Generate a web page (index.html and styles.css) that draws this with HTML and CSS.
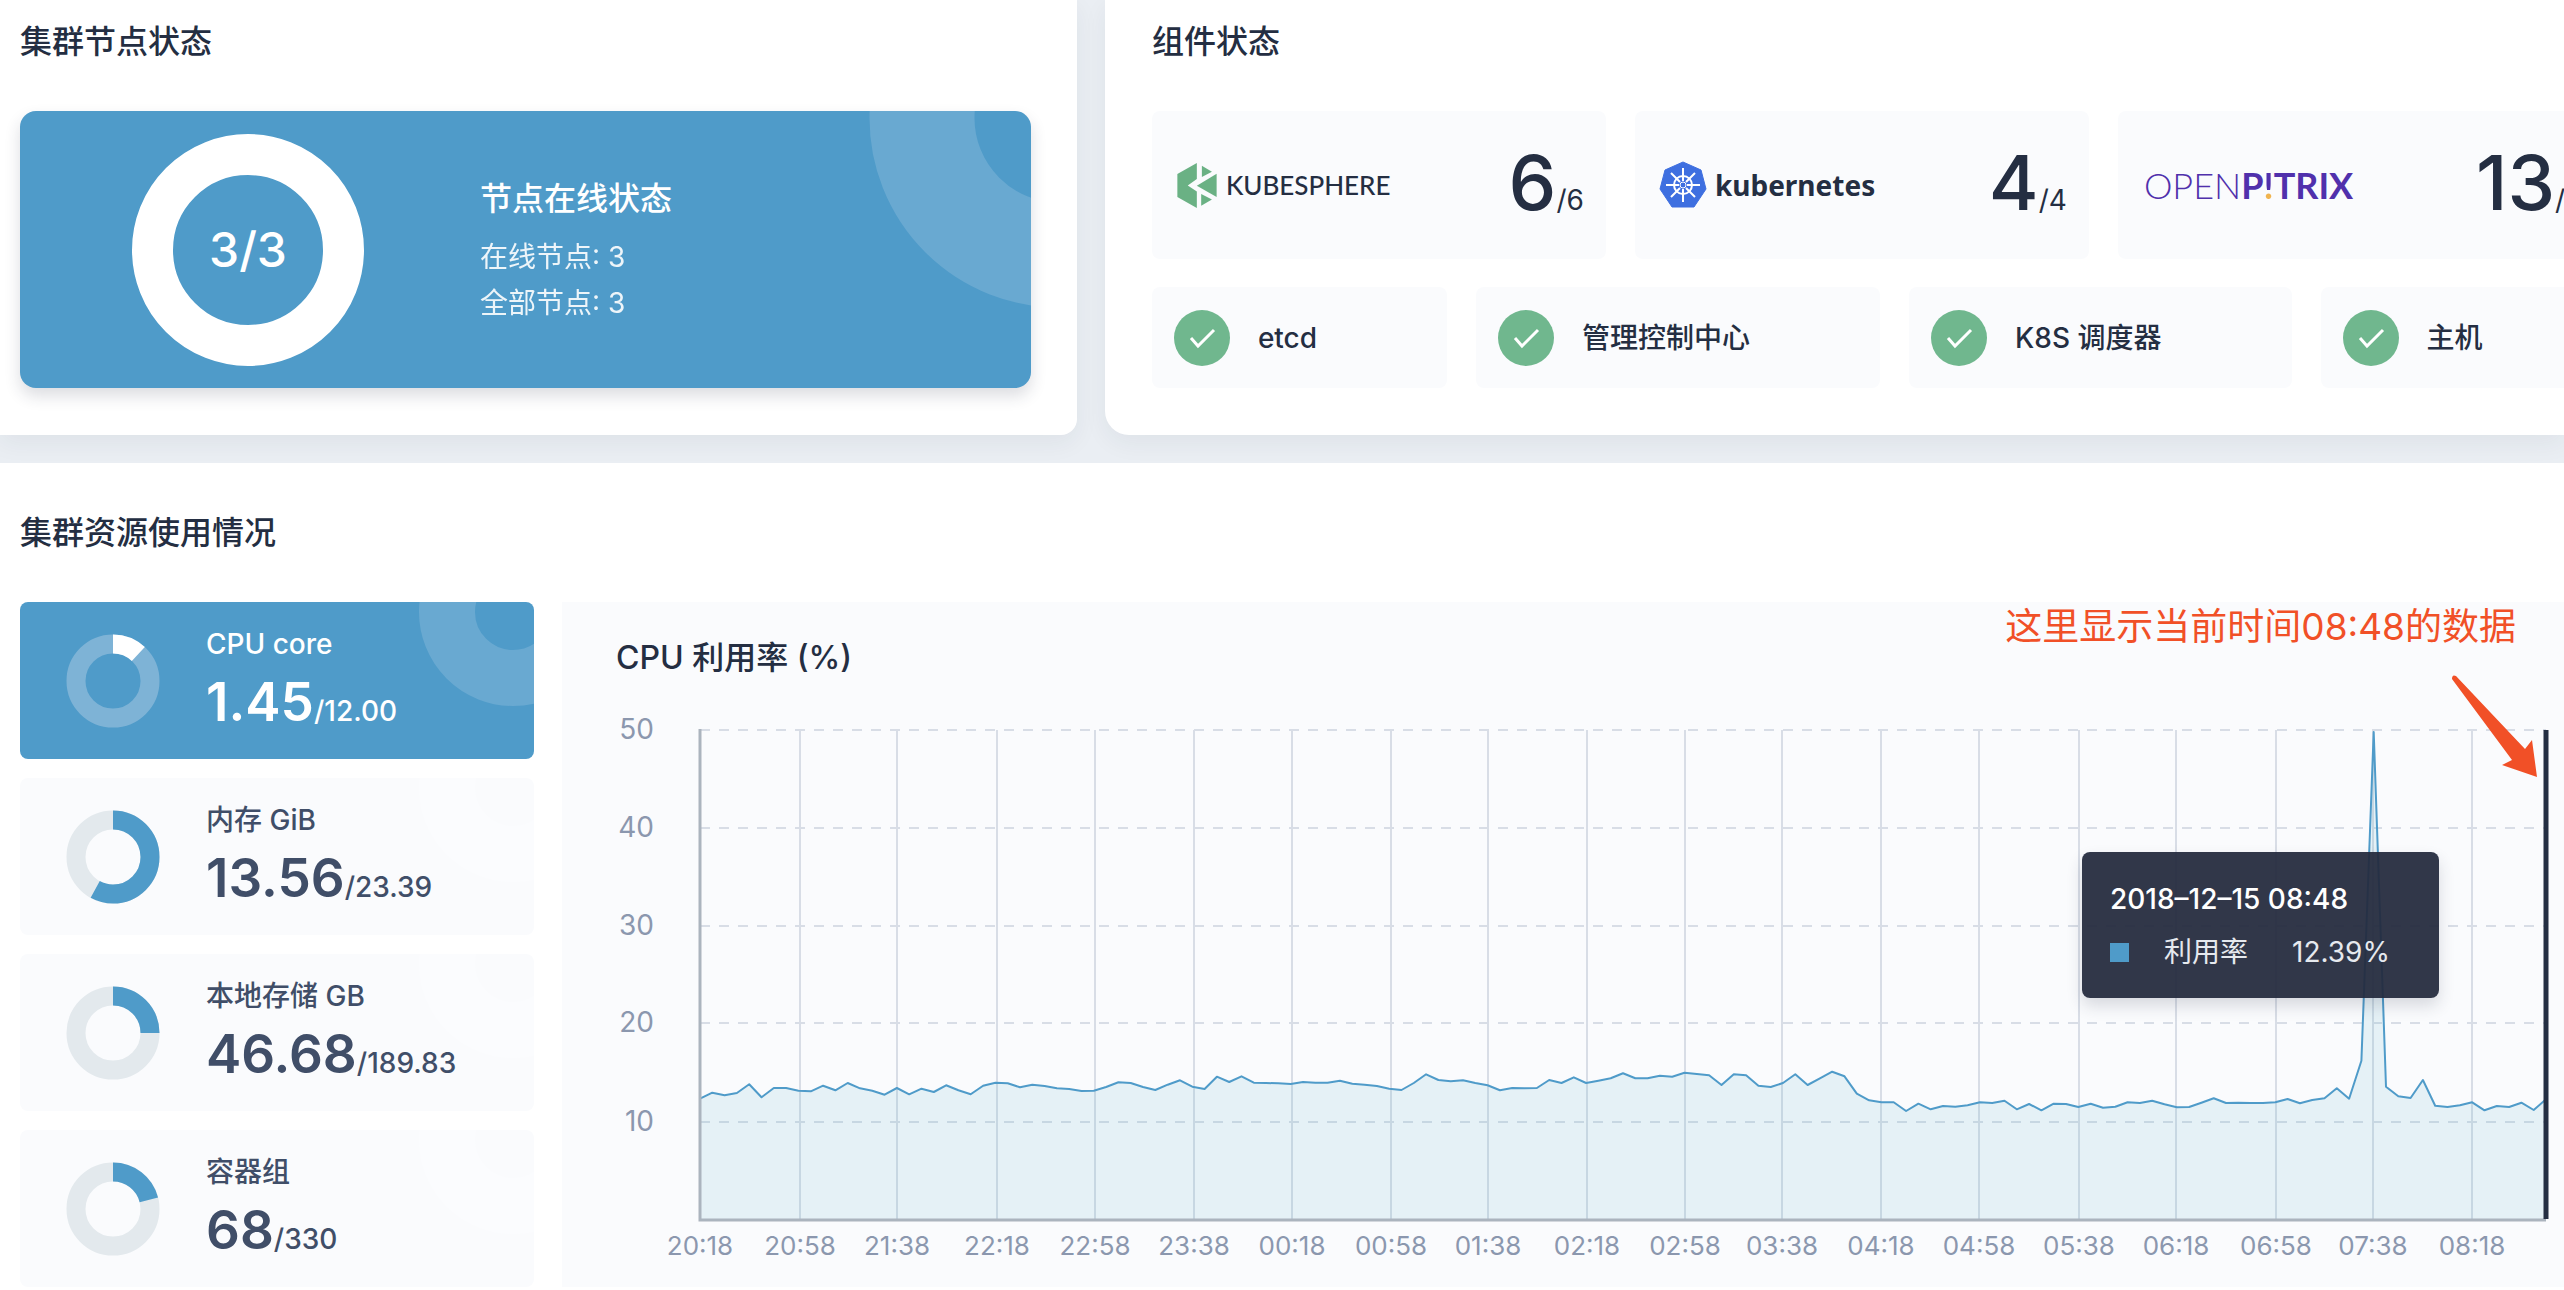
FILE: index.html
```html
<!DOCTYPE html>
<html lang="zh-CN">
<head>
<meta charset="utf-8">
<title>集群状态</title>
<link rel="stylesheet" href="styles.css">
</head>
<body>
<main class="dashboard">
  <div class="top">
    <section class="panel nodes">
      <h2 class="heading">集群节点状态</h2>
      <div class="node-card">
        <svg class="node-deco" width="162" height="196" viewBox="0 0 162 196" aria-hidden="true"><circle cx="190" cy="7" r="137" fill="none" stroke="currentColor" stroke-width="105"/></svg>
        <div class="node-ring">3/3</div>
        <div class="node-info">
          <h3>节点在线状态</h3>
          <p>在线节点: 3</p>
          <p>全部节点: 3</p>
        </div>
      </div>
    </section>

    <section class="panel components">
      <h2 class="heading">组件状态</h2>
      <div class="services">
        <div class="service">
          <div class="logo kubesphere">
            <svg width="42" height="47" viewBox="20 62 125 140" aria-hidden="true"><g fill="#6ab184"><path d="M24 98 82 65V113L55 132 82 150V199L24 166Z"/><path d="M97 73 127 91 97 107Z"/><path d="M82 133 141 97V166Z"/><path d="M95 157 127 174 95 192Z"/></g></svg>
            <span>KUBESPHERE</span>
          </div>
          <p class="count"><strong>6</strong>/6</p>
        </div>
        <div class="service">
          <div class="logo kubernetes">
            <svg width="48" height="48" viewBox="0 0 48 48" aria-hidden="true">
              <path d="M24 1 42 9 47 28 35 46H13L1 28 6 9Z" fill="#3e6fe0" stroke="#3e6fe0" stroke-linejoin="round"/>
              <g stroke="#fff" stroke-width="2" fill="none"><circle cx="24" cy="24" r="9"/><path d="M24 7V20M24 28V41M7 24H20M28 24H41M12 12 21 21M27 27 36 36M36 12 27 21M21 27 12 36"/><circle cx="24" cy="24" r="3" stroke-width="1"/></g>
            </svg>
            <span>kubernetes</span>
          </div>
          <p class="count"><strong>4</strong>/4</p>
        </div>
        <div class="service wide">
          <div class="logo openpitrix"><span>OPEN<b>P<i>!</i>TRIX</b></span></div>
          <p class="count"><strong>13</strong>/13</p>
        </div>
      </div>
      <div class="checks">
        <div class="check"><svg width="56" height="56" viewBox="0 0 56 56" aria-hidden="true"><circle cx="28" cy="28" r="28" fill="#70b78e"/><path d="M17 28 24 36 40 20" fill="none" stroke="#fff" stroke-width="3"/></svg>etcd</div>
        <div class="check"><svg width="56" height="56" viewBox="0 0 56 56" aria-hidden="true"><circle cx="28" cy="28" r="28" fill="#70b78e"/><path d="M17 28 24 36 40 20" fill="none" stroke="#fff" stroke-width="3"/></svg>管理控制中心</div>
        <div class="check"><svg width="56" height="56" viewBox="0 0 56 56" aria-hidden="true"><circle cx="28" cy="28" r="28" fill="#70b78e"/><path d="M17 28 24 36 40 20" fill="none" stroke="#fff" stroke-width="3"/></svg>K8S 调度器</div>
        <div class="check"><svg width="56" height="56" viewBox="0 0 56 56" aria-hidden="true"><circle cx="28" cy="28" r="28" fill="#70b78e"/><path d="M17 28 24 36 40 20" fill="none" stroke="#fff" stroke-width="3"/></svg>主机</div>
      </div>
    </section>
  </div>

  <section class="usage">
    <h2 class="heading">集群资源使用情况</h2>
    <div class="usage-body">
      <div class="metrics">
        <div class="metric active">
          <svg class="metric-deco" width="115" height="104" viewBox="0 0 115 104" aria-hidden="true"><circle cx="94" cy="10" r="66" fill="none" stroke="currentColor" stroke-width="56"/></svg>
          <svg class="donut" viewBox="0 0 94 94" aria-hidden="true"><circle class="track" cx="47" cy="47" r="37"/><circle class="arc" cx="47" cy="47" r="37" pathLength="100" stroke-dasharray="12 100"/></svg>
          <div class="metric-text"><h3>CPU core</h3><p><strong>1.45</strong>/12.00</p></div>
        </div>
        <div class="metric">
          <svg class="metric-deco" width="115" height="104" viewBox="0 0 115 104" aria-hidden="true"><circle cx="94" cy="10" r="66" fill="none" stroke="currentColor" stroke-width="56"/></svg>
          <svg class="donut" viewBox="0 0 94 94" aria-hidden="true"><circle class="track" cx="47" cy="47" r="37"/><circle class="arc" cx="47" cy="47" r="37" pathLength="100" stroke-dasharray="58 100"/></svg>
          <div class="metric-text"><h3>内存 GiB</h3><p><strong>13.56</strong>/23.39</p></div>
        </div>
        <div class="metric">
          <svg class="metric-deco" width="115" height="104" viewBox="0 0 115 104" aria-hidden="true"><circle cx="94" cy="10" r="66" fill="none" stroke="currentColor" stroke-width="56"/></svg>
          <svg class="donut" viewBox="0 0 94 94" aria-hidden="true"><circle class="track" cx="47" cy="47" r="37"/><circle class="arc" cx="47" cy="47" r="37" pathLength="100" stroke-dasharray="25 100"/></svg>
          <div class="metric-text"><h3>本地存储 GB</h3><p><strong>46.68</strong>/189.83</p></div>
        </div>
        <div class="metric">
          <svg class="metric-deco" width="115" height="104" viewBox="0 0 115 104" aria-hidden="true"><circle cx="94" cy="10" r="66" fill="none" stroke="currentColor" stroke-width="56"/></svg>
          <svg class="donut" viewBox="0 0 94 94" aria-hidden="true"><circle class="track" cx="47" cy="47" r="37"/><circle class="arc" cx="47" cy="47" r="37" pathLength="100" stroke-dasharray="21 100"/></svg>
          <div class="metric-text"><h3>容器组</h3><p><strong>68</strong>/330</p></div>
        </div>
      </div>

      <div class="chart">
        <h3 class="chart-title">CPU 利用率 (%)</h3>
        <svg class="plot" viewBox="0 0 2002 585" role="img" aria-label="CPU 利用率">
          <path class="grid-x" d="M238 30V520M335 30V520M435 30V520M533 30V520M632 30V520M730 30V520M829 30V520M926 30V520M1025 30V520M1123 30V520M1220 30V520M1319 30V520M1417 30V520M1517 30V520M1614 30V520M1714 30V520M1811 30V520M1910 30V520"/>
          <path class="grid-y" d="M138 30H1984M138 128H1984M138 226H1984M138 323H1984M138 422H1984"/>
          <path class="area" id="area"/>
          <path class="line" id="line"/>
          <path class="axis" d="M138 29V520H1984"/>
          <path class="cursor" d="M1984 30V519"/>
          <g class="ylabels"><text x="92" y="39">50</text><text x="92" y="137">40</text><text x="92" y="235">30</text><text x="92" y="332">20</text><text x="92" y="431">10</text></g>
          <g class="xlabels"><text x="138" y="555">20:18</text><text x="238" y="555">20:58</text><text x="335" y="555">21:38</text><text x="435" y="555">22:18</text><text x="533" y="555">22:58</text><text x="632" y="555">23:38</text><text x="730" y="555">00:18</text><text x="829" y="555">00:58</text><text x="926" y="555">01:38</text><text x="1025" y="555">02:18</text><text x="1123" y="555">02:58</text><text x="1220" y="555">03:38</text><text x="1319" y="555">04:18</text><text x="1417" y="555">04:58</text><text x="1517" y="555">05:38</text><text x="1614" y="555">06:18</text><text x="1714" y="555">06:58</text><text x="1811" y="555">07:38</text><text x="1910" y="555">08:18</text></g>
        </svg>
        <div class="tooltip">
          <h4>2018–12–15 08:48</h4>
          <p><span class="swatch"></span><span>利用率</span><span>12.39%</span></p>
        </div>
        <div class="note">
          <p>这里显示当前时间08:48的数据</p>
          <svg width="88" height="104" viewBox="0 0 88 104" aria-hidden="true"><path d="M2 5Q2 0 6 2L75 75 82 66 87 103 52 91 62 86Z" fill="#f15027"/></svg>
        </div>
      </div>
    </div>
  </section>
</main>
<script src="chart.js"></script>
</body>
</html>
```
FILE: chart.js
```js
// Utilisation samples, one every five minutes, 294 units to 10 %.
const samples = [
  364,382,374,381,407,368,396,396,388,386,403,389,411,395,388,376,396,377,394,384,
  404,389,377,403,412,410,398,406,402,395,393,387,388,399,413,411,399,390,406,419,
  400,393,430,414,431,412,411,410,408,414,412,412,418,409,406,402,394,390,411,437,
  420,416,419,411,404,389,396,395,396,420,411,428,411,418,425,440,425,425,433,430,
  442,438,434,405,437,434,403,399,411,437,405,425,445,431,379,359,353,353,327,349,
  332,342,340,344,353,351,358,332,348,329,349,348,339,349,337,340,353,351,358,347,
  338,339,352,365,351,352,351,351,353,363,350,360,365,395,364,478,1464,400,371,366,
  420,343,339,344,353,329,342,339,352,330,362
];
const left = 138, right = 1984, base = 520;
const step = (right - left) / (samples.length - 1);
const points = samples.map((v, i) => (left + i * step).toFixed(1) + " " + (base - v / 3).toFixed(1));
document.getElementById("line").setAttribute("d", "M" + points.join("L"));
document.getElementById("area").setAttribute("d", "M" + left + " " + base + "L" + points.join("L") + "V" + base + "Z");
```
FILE: styles.css
```css
* { box-sizing: border-box; }
h2, h3, h4, p { margin: 0; font-weight: inherit; font-size: inherit; }
body {
  margin: 0;
  background: #eaeef3;
  color: #242e42;
  font-family: Inter, "Noto Sans CJK SC", sans-serif;
  font-size: 28px;
  line-height: 48px;
  overflow-x: hidden;
}
svg { display: block; flex: none; }

.top { display: flex; gap: 28px; margin-bottom: 28px; }
.panel {
  background: #fff;
  padding: 18px 46px 47px 20px;
  box-shadow: 0 8px 24px rgba(36, 46, 66, .06);
}
.nodes { flex: 0 0 42%; border-bottom-right-radius: 16px; }
.components { flex: 1; min-width: 0; overflow: hidden; padding-left: 47px; padding-right: 0; border-bottom-left-radius: 24px; }
.heading { font-size: 32px; font-weight: 500; margin-bottom: 45px; }

.node-card {
  position: relative;
  display: flex;
  align-items: center;
  gap: 116px;
  height: 277px;
  padding-left: 112px;
  border-radius: 16px;
  overflow: hidden;
  background: #4f9bc9;
  box-shadow: 0 8px 16px rgba(36, 46, 66, .16);
  color: #fff;
}
.node-deco { position: absolute; top: 0; right: 0; color: #69a9d1; }
.node-ring {
  display: grid;
  place-items: center;
  flex: none;
  width: 232px;
  height: 232px;
  border: 41px solid #fff;
  border-radius: 50%;
  font-size: 48px;
  font-weight: 500;
}
.node-info { padding-bottom: 10px; }
.node-info h3 { font-size: 32px; font-weight: 500; line-height: 70px; }
.node-info p { opacity: .9; line-height: 46px; }

.services, .checks { display: flex; gap: 29px; }
.services { margin-bottom: 28px; }
.service, .check { flex: none; display: flex; align-items: center; background: #fafbfd; border-radius: 8px; }
.service { width: 454px; height: 148px; padding: 0 22px 0 24px; justify-content: space-between; }
.service.wide { width: 498px; }
.logo { display: flex; align-items: center; gap: 8px; }
.kubesphere span { font: 500 26px Lato, sans-serif; }
.kubernetes span { font: 700 28px "Noto Sans", sans-serif; }
.openpitrix span { font: 300 36px Lato, sans-serif; color: #5030ac; padding-left: 2px; }
.openpitrix b { font-weight: 700; }
.openpitrix i { font-style: normal; color: transparent; background: linear-gradient(#5030ac 68%, #f0b450 68%); -webkit-background-clip: text; background-clip: text; }
.count { line-height: 80px; padding-top: 12px; }
.count strong { font-size: 76px; font-weight: 500; }
.check { height: 101px; padding: 0 130px 0 22px; gap: 28px; font-weight: 500; white-space: nowrap; }

.usage { background: #fff; padding: 46px 0 4px 20px; }
.usage-body { display: grid; grid-template-columns: 514px 1fr; gap: 28px; }
.metrics { display: grid; gap: 19px; align-content: start; }
.metric {
  position: relative;
  display: flex;
  align-items: center;
  gap: 46px;
  height: 157px;
  padding-left: 46px;
  border-radius: 8px;
  overflow: hidden;
  background: #fafbfd;
  color: #404e68;
}
.metric-deco { position: absolute; top: 0; right: 0; color: #fbfcfe; }
.donut { width: 94px; height: 94px; transform: rotate(-90deg); }
.donut circle { fill: none; stroke-width: 19; }
.donut .track { stroke: #e3e9ed; }
.donut .arc { stroke: #4f9bc9; }
.metric-text { padding-top: 10px; }
.metric h3 { font-weight: 500; line-height: 40px; margin-bottom: 2px; }
.metric p { font-weight: 500; line-height: 72px; }
.metric strong { font-size: 53px; font-weight: 600; }
.metric.active { background: #4f9bc9; color: #fff; }
.active .metric-deco { color: #69a9d1; }
.active .track { stroke: #7eb3d6; }
.active .arc { stroke: #fff; }

.chart { position: relative; background: #fafbfd; padding-top: 32px; }
.chart-title { padding-left: 54px; font-size: 32px; font-weight: 500; margin-bottom: 18px; }
.plot { width: 100%; height: auto; font-size: 26px; }
.plot path { fill: none; stroke-width: 2; }
.plot .grid-x { stroke: #d8dde6; }
.plot .grid-y { stroke: #d8dde6; stroke-dasharray: 10 9; }
.plot .area { fill: #50afc8; fill-opacity: .12; }
.plot .line { stroke: #4f9bc9; stroke-linejoin: round; }
.plot .axis { stroke: #abb4be; stroke-width: 3; }
.plot .cursor { stroke: #242e42; stroke-width: 5; }
.plot text { fill: #8b97ae; }
.ylabels { text-anchor: end; font-size: 28px; }
.xlabels { text-anchor: middle; }

.tooltip {
  position: absolute;
  top: 250px;
  right: 125px;
  width: 357px;
  padding: 27px 28px 26px;
  border-radius: 8px;
  background: rgba(36, 42, 62, .94);
  box-shadow: 0 8px 16px rgba(36, 46, 66, .16);
  color: #fff;
  line-height: 40px;
}
.tooltip h4 { font-weight: 500; margin-bottom: 13px; }
.tooltip p { display: flex; align-items: center; color: #e6e9ee; white-space: nowrap; }
.swatch { width: 19px; height: 19px; background: #4f9bc9; margin-right: 35px; }
.swatch + span { margin-right: 44px; }

.note { position: absolute; top: 1px; right: 26px; display: flex; flex-direction: column; align-items: flex-end; gap: 23px; color: #f15027; font-size: 37px; }
.note p { margin-right: 22px; }
```
